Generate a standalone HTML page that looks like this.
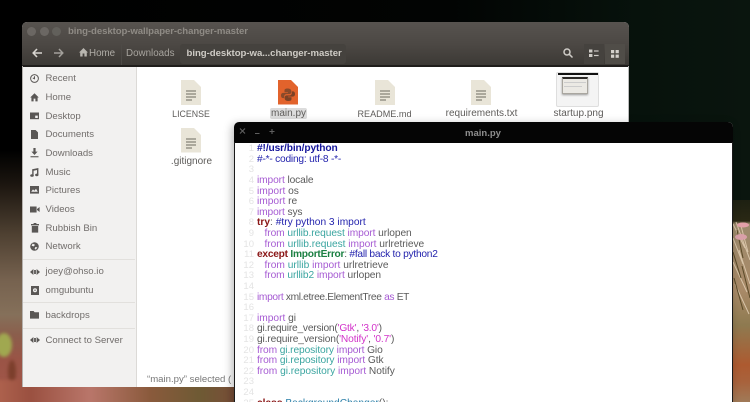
<!DOCTYPE html>
<html><head><meta charset="utf-8"><title>main.py</title>
<style>
html,body{margin:0;padding:0;background:#000}
#o{position:relative;width:750px;height:402px;overflow:hidden;background:#000}
#p{position:absolute;left:0;top:0;width:750px;height:402px;overflow:hidden;font-family:"Liberation Sans",sans-serif;background:#000;filter:blur(.35px)}
#p div{position:absolute}
.t{white-space:nowrap}
.fw{left:22px;top:22px;width:607px;height:365px;border-radius:5px 5px 0 0;overflow:hidden;background:#fff}
.s{left:45.5px;margin-top:1px;font-size:9.6px;color:#716d6b;white-space:nowrap;line-height:12px}
.l{margin-top:.5px;font-size:10px;color:#5e5c5a;white-space:nowrap;line-height:12px;transform:translateX(-50%)}
.c{left:257px;margin-top:1.2px;font-size:10.2px;line-height:12px;color:#5a5a5a;white-space:pre}
.n{left:236px;margin-top:1.2px;width:18px;text-align:right;font-size:9.5px;line-height:12px;color:#e4e4e4}
.i{color:#a65bd3}.m{color:#3aa5a0}.k{color:#8a1616;font-weight:bold}.b{color:#2323ad}.g{color:#1c8043;font-weight:bold}.q{color:#d233c9}
svg{position:absolute;overflow:visible}
</style></head><body>
<div id="o"><div id="p">
<div style="inset:0;background:linear-gradient(90deg,#000 0,#020403 60%,#07120c 85%,#0a150e 100%)"></div>
<div style="left:0;top:150px;width:30px;height:252px;background:linear-gradient(180deg,#000 0,#1c1610 35px,#4f4132 85px,#76624f 130px,#85705a 165px,#8b5e4c 185px,#9a5446 210px,#a4574a 252px)"></div>
<svg style="left:0;top:0;filter:blur(1.5px)" width="750" height="402"><ellipse cx="4" cy="345" rx="8" ry="12" fill="#a0a850"/><ellipse cx="12" cy="372" rx="4" ry="12" fill="#7c3f2c"/></svg>
<div style="left:-6px;top:380px;width:250px;height:30px;background:linear-gradient(90deg,#b0644f,#9a5040 36px,#b9766a 96px,#8a5a3c 156px,#6e5a34 206px,#7b4a38 250px);filter:blur(1.5px)"></div>
<div style="left:730px;top:200px;width:24px;height:210px;background:linear-gradient(180deg,#1d2012 0,#2a2814 21px,#9c8a6c 24px,#a98a68 90px,#8e7a50 125px,#ad5a30 165px,#a8623c 182px,#a07a58 202px)"></div>
<svg style="left:733px;top:222px" width="17" height="120" stroke-width="1" fill="none"><path d="M0 2L12 26M3 0L17 38M0 16L10 42M6 28L17 62M0 40L14 70M2 62L16 92M8 4L15 30" stroke="#d8c4a8"/><path d="M4 8L10 36M0 30L8 56M9 44L17 76M1 56L10 88" stroke="#5a4a28"/><ellipse cx="10" cy="3" rx="6" ry="2.5" fill="#e2a0a8"/><ellipse cx="8" cy="15" rx="6" ry="3" fill="#d9a0a8"/></svg>

<div class="fw">
 <div style="left:0;top:0;width:607px;height:44px;background:linear-gradient(180deg,#57534f 0,#4c4844 22px,#3b3834 44px)"></div>
 <div style="left:0;top:43px;width:607px;height:1.5px;background:#1f1d1b"></div>
 <div style="left:1px;top:44.5px;width:113px;height:321px;background:#f2f1f0"></div>
 <div style="left:113.5px;top:44.5px;width:1px;height:321px;background:#dcdad7"></div>
 <div style="left:0;top:44px;width:1px;height:321px;background:#b5b1ad"></div>
 <div style="left:606px;top:44px;width:1px;height:321px;background:#bbb"></div>
</div>

<!-- titlebar -->
<div style="left:27px;top:27px;width:9px;height:9px;border-radius:50%;background:#6b6763"></div>
<div style="left:40px;top:27px;width:9px;height:9px;border-radius:50%;background:#6b6763"></div>
<div style="left:51.5px;top:27px;width:9px;height:9px;border-radius:50%;background:#62605b"></div>
<div class="t" style="left:68px;top:25px;font-size:9.6px;line-height:13px;font-weight:bold;color:#8f8b85;letter-spacing:-.08px">bing-desktop-wallpaper-changer-master</div>

<!-- toolbar -->
<svg style="left:32px;top:48px" width="11" height="10" fill="none" stroke="#d8d5d0" stroke-width="1.6"><path d="M10 5H1.5M5 1L1.2 5L5 9"/></svg>
<svg style="left:53px;top:48px" width="11" height="10" fill="none" stroke="#a3a09b" stroke-width="1.5"><path d="M1 5H9.5M6 1L9.8 5L6 9"/></svg>
<svg style="left:79px;top:48px" width="9" height="9" fill="#b9b6b0"><path d="M4.5 0L9 4.5H7.8V8.5H5.4V5.5H3.6V8.5H1.2V4.5H0Z"/></svg>
<div class="t" style="left:89px;top:48px;font-size:9.8px;line-height:12px;color:#b0ada7">Home</div>
<div style="left:120.5px;top:44px;width:1px;height:21px;background:#4d4a46"></div>
<div class="t" style="left:126px;top:48px;font-size:9.8px;line-height:12px;color:#a7a49e">Downloads</div>
<div style="left:180px;top:44px;width:166px;height:20px;background:#45423e;border-radius:3px"></div>
<div class="t" style="left:186.5px;top:48px;font-size:9.6px;line-height:12px;font-weight:bold;color:#cfccc6;letter-spacing:-.03px">bing-desktop-wa...changer-master</div>
<svg style="left:563px;top:48px" width="10" height="10" fill="none" stroke="#cfccc7" stroke-width="1.5"><circle cx="4" cy="4" r="3"/><path d="M6.3 6.3L9.5 9.5"/></svg>
<div style="left:584px;top:44px;width:20px;height:20px;background:#45423e"></div>
<svg style="left:589px;top:49px" width="10" height="9" fill="#cfccc7"><rect x="0" y="0.5" width="3.4" height="3"/><rect x="0" y="5" width="3.4" height="3"/><rect x="5" y="1.4" width="4.6" height="1.2"/><rect x="5" y="5.9" width="4.6" height="1.2"/></svg>
<div style="left:604.5px;top:44px;width:20px;height:20px;background:#504d48"></div>
<svg style="left:611px;top:49.5px" width="8" height="8" fill="#d4d1cc"><rect width="3.2" height="3.2"/><rect x="4.6" width="3.2" height="3.2"/><rect y="4.6" width="3.2" height="3.2"/><rect x="4.6" y="4.6" width="3.2" height="3.2"/></svg>

<!-- sidebar icons -->
<svg style="left:30px;top:74px" width="9" height="9" fill="none" stroke="#5a5755" stroke-width="1"><circle cx="4.5" cy="4.5" r="3.9"/><path d="M4.5 2.2V4.7L2.8 4"/></svg>
<svg style="left:30px;top:93px" width="9" height="9" fill="#5a5755"><path d="M4.5 0.2L8.8 4.5H7.6V8.4H5.4V5.6H3.6V8.4H1.4V4.5H0.2Z"/></svg>
<svg style="left:30px;top:112px" width="9" height="8" fill="#5a5755"><path d="M0 .5H9V7.2H0Z"/><rect x="5.2" y="3.6" width="2.6" height="2.4" fill="#f2f1f0"/></svg>
<svg style="left:31px;top:130px" width="7" height="9" fill="#5a5755"><path d="M0 0H4.6L7 2.4V9H0Z"/></svg>
<svg style="left:30px;top:148px" width="9" height="10" fill="#5a5755"><path d="M3.4 0H5.6V3.6H7.6L4.5 7L1.4 3.6H3.4Z"/><rect x="0.5" y="8.2" width="8" height="1.1"/></svg>
<svg style="left:30px;top:167.5px" width="9" height="9" fill="#5a5755"><path d="M2.2 1.2L8.4 0V6.8H7V2L3.6 2.8V7.6H2.2Z"/><ellipse cx="2" cy="7.5" rx="1.8" ry="1.3"/><ellipse cx="6.8" cy="6.9" rx="1.7" ry="1.3"/></svg>
<svg style="left:30px;top:186px" width="9" height="8" fill="#5a5755"><path d="M0 0H9V7.6H0Z"/><path d="M1.2 5.8L3 3.4L4.4 4.8L6 2.8L7.8 5.8Z" fill="#f2f1f0"/></svg>
<svg style="left:30px;top:205.5px" width="10" height="7" fill="#5a5755"><rect y="0.5" width="6.6" height="6"/><path d="M7 3L9.6 1V6L7 4Z"/></svg>
<svg style="left:30.5px;top:223px" width="8" height="10" fill="#5a5755"><rect x="0" y="1" width="8" height="1.4"/><rect x="2.6" y="0" width="2.8" height="1"/><rect x="0.8" y="3" width="6.4" height="6.6"/></svg>
<svg style="left:30px;top:242px" width="9" height="9" fill="#5a5755"><circle cx="4.5" cy="4.5" r="4.3"/><path d="M2.6 1.6L5 2.8L3.8 4.4L1.6 3.8ZM5.4 5L7.4 5.4L5.8 7.6L4.6 6.6Z" fill="#f2f1f0"/></svg>
<svg style="left:29.5px;top:268.5px" width="10" height="6" fill="#5a5755"><path d="M0 3L3.4 0V6ZM10 3L6.6 0V6Z"/><rect x="4" y="1" width="0.9" height="4"/><rect x="5.1" y="1" width="0.9" height="4"/></svg>
<svg style="left:30.5px;top:285.5px" width="8" height="9" fill="#5a5755"><path d="M0 0H8V9H0Z"/><circle cx="4" cy="4.2" r="2" fill="#f2f1f0"/><circle cx="4" cy="4.2" r=".7"/></svg>
<svg style="left:30px;top:311px" width="9" height="8" fill="#5a5755"><path d="M0 0H3.6L4.6 1.2H9V7.6H0Z"/></svg>
<svg style="left:29.5px;top:337px" width="10" height="6" fill="#5a5755"><path d="M0 3L3.4 0V6ZM10 3L6.6 0V6Z"/><rect x="4" y="1" width="0.9" height="4"/><rect x="5.1" y="1" width="0.9" height="4"/></svg>

<div class="s" style="top:72px">Recent</div>
<div class="s" style="top:90.5px">Home</div>
<div class="s" style="top:109.5px">Desktop</div>
<div class="s" style="top:128px">Documents</div>
<div class="s" style="top:146.5px">Downloads</div>
<div class="s" style="top:165.5px">Music</div>
<div class="s" style="top:184px">Pictures</div>
<div class="s" style="top:202.5px">Videos</div>
<div class="s" style="top:221.5px">Rubbish Bin</div>
<div class="s" style="top:240px">Network</div>
<div style="left:23px;top:258.5px;width:112px;height:1px;background:#e2e0dd"></div>
<div class="s" style="top:265px">joey@ohso.io</div>
<div class="s" style="top:284px">omgubuntu</div>
<div style="left:23px;top:302px;width:112px;height:1px;background:#e2e0dd"></div>
<div class="s" style="top:308.5px">backdrops</div>
<div style="left:23px;top:327.5px;width:112px;height:1px;background:#e2e0dd"></div>
<div class="s" style="top:333.5px">Connect to Server</div>

<!-- files -->
<svg style="left:181px;top:80px" width="20" height="25"><path d="M0 0H13L20 7V25H0Z" fill="#e9e5d8"/><path d="M5 11H15M5 14H15M5 17H15M5 20H11" stroke="#6d6a60" stroke-width="1"/></svg>
<div class="l" style="left:191px;top:107.5px;font-size:8.8px">LICENSE</div>

<svg style="left:278px;top:80px" width="20" height="25"><path d="M0 0H13L20 7V24.5H0Z" fill="#e2632c"/><path d="M9.5 8.5c-3 0-3 1.2-3 2.6v1.2h3.4v.6H5.2c-1.6 0-2.2 1.2-2.2 2.6s.7 2.6 2 2.6h1.2v-1.6c0-1.4 1-2.4 2.4-2.4h2.8c1.1 0 1.9-.9 1.9-2V11c0-1.4-1.2-2.5-3.8-2.5Z" fill="#8a4a2a"/><path d="M10.5 21c3 0 3-1.2 3-2.6v-1.2h-3.4v-.6h4.7c1.6 0 2.2-1.2 2.2-2.6s-.7-2.6-2-2.6h-1.2V13c0 1.4-1 2.4-2.4 2.4H8.6c-1.1 0-1.9.9-1.9 2v1.1c0 1.4 1.2 2.5 3.8 2.5Z" fill="#7c4226"/></svg>
<div style="left:270px;top:107.5px;width:37px;height:11px;background:#dcdcdc;border-radius:2px"></div>
<div class="l" style="left:288.5px;top:107.5px">main.py</div>

<svg style="left:375px;top:80px" width="20" height="25"><path d="M0 0H13L20 7V25H0Z" fill="#e9e5d8"/><path d="M5 11H15M5 14H15M5 17H15M5 20H11" stroke="#6d6a60" stroke-width="1"/></svg>
<div class="l" style="left:384.5px;top:107.5px;font-size:9.1px">README.md</div>

<svg style="left:471px;top:80px" width="20" height="25"><path d="M0 0H13L20 7V25H0Z" fill="#e9e5d8"/><path d="M5 11H15M5 14H15M5 17H15M5 20H11" stroke="#6d6a60" stroke-width="1"/></svg>
<div class="l" style="left:481.5px;top:107.5px">requirements.txt</div>

<div style="left:556px;top:71.5px;width:43px;height:35px;background:#f4f4f4;border:1px solid #dedede;border-radius:2px;box-sizing:border-box"></div>
<div style="left:557.5px;top:73px;width:40px;height:2px;background:#111"></div>
<div style="left:562px;top:77px;width:26px;height:17px;background:#ebe9e4;border:1px solid #a9a69f;border-top:2px solid #2b2926;box-sizing:border-box;box-shadow:0 1px 2px #999"></div>
<div style="left:564px;top:82px;width:22px;height:1px;background:#ccc"></div>
<div style="left:564px;top:86px;width:18px;height:1px;background:#ccc"></div>
<div class="l" style="left:578.5px;top:107.5px">startup.png</div>

<svg style="left:181px;top:128px" width="20" height="25"><path d="M0 0H13L20 7V24.5H0Z" fill="#e9e5d8"/><path d="M5 11H15M5 14H15M5 17H15M5 20H11" stroke="#6d6a60" stroke-width="1"/></svg>
<div class="l" style="left:191.5px;top:155.5px">.gitignore</div>

<div class="t" style="left:147px;top:373.5px;font-size:9.6px;line-height:12px;color:#777">“main.py” selected  (</div>

<!-- editor -->
<div style="left:234px;top:122px;width:499px;height:290px;border-radius:5px 5px 0 0;background:#fff;box-shadow:-2px 2px 9px rgba(0,0,0,.28)"></div>
<div style="left:234px;top:121.5px;width:499px;height:21px;border-radius:5px 5px 0 0;background:#050505"></div>
<div style="left:234px;top:142px;width:1.2px;height:260px;background:#1a1a1a"></div>
<div style="left:732px;top:142px;width:1.2px;height:260px;background:#1a1a1a"></div>
<svg style="left:239px;top:127px" width="40" height="10" fill="none" stroke="#5f5f5f" stroke-width="1.1"><path d="M1 1.5L6 6.5M6 1.5L1 6.5M16 6.5H20.5M33 2V7M30.5 4.5H35.5"/></svg>
<div class="t" style="left:483px;top:127.5px;transform:translateX(-50%);font-size:9.5px;line-height:12px;font-weight:bold;color:#8e8e8e">main.py</div>

<div class="n" style="top:142px">1</div><div class="c" style="top:142px;letter-spacing:-.12px"><b style="color:#15159a">#!/usr/bin/python</b></div>
<div class="n" style="top:152.6px">2</div><div class="c" style="top:152.6px;letter-spacing:-.22px"><span class="b">#-*- coding: utf-8 -*-</span></div>
<div class="n" style="top:163.2px">3</div>
<div class="n" style="top:173.8px">4</div><div class="c" style="top:173.8px;letter-spacing:-.1px"><span class="i">import</span> locale</div>
<div class="n" style="top:184.4px">5</div><div class="c" style="top:184.4px"><span class="i">import</span> os</div>
<div class="n" style="top:195px">6</div><div class="c" style="top:195px"><span class="i">import</span> re</div>
<div class="n" style="top:205.6px">7</div><div class="c" style="top:205.6px;letter-spacing:-.1px"><span class="i">import</span> sys</div>
<div class="n" style="top:216.2px">8</div><div class="c" style="top:216.2px"><span class="k">try</span>: <span class="b">#try python 3 import</span></div>
<div class="n" style="top:226.8px">9</div><div class="c" style="top:226.8px;left:264.5px;letter-spacing:-.07px"><span class="i">from</span> <span class="m">urllib.request</span> <span class="i">import</span> urlopen</div>
<div class="n" style="top:237.4px">10</div><div class="c" style="top:237.4px;left:264.5px;letter-spacing:-.03px"><span class="i">from</span> <span class="m">urllib.request</span> <span class="i">import</span> urlretrieve</div>
<div class="n" style="top:248px">11</div><div class="c" style="top:248px;letter-spacing:-.25px"><span class="k">except</span> <span class="g">ImportError</span>: <span class="b">#fall back to python2</span></div>
<div class="n" style="top:258.6px">12</div><div class="c" style="top:258.6px;left:264.5px"><span class="i">from</span> <span class="m">urllib</span> <span class="i">import</span> urlretrieve</div>
<div class="n" style="top:269.2px">13</div><div class="c" style="top:269.2px;left:264.5px;letter-spacing:-.07px"><span class="i">from</span> <span class="m">urllib2</span> <span class="i">import</span> urlopen</div>
<div class="n" style="top:279.8px">14</div>
<div class="n" style="top:290.4px">15</div><div class="c" style="top:290.4px;letter-spacing:-.33px"><span class="i">import</span> xml.etree.ElementTree <span class="i">as</span> ET</div>
<div class="n" style="top:301px">16</div>
<div class="n" style="top:311.6px">17</div><div class="c" style="top:311.6px"><span class="i">import</span> gi</div>
<div class="n" style="top:322.2px">18</div><div class="c" style="top:322.2px;letter-spacing:-.2px">gi.require_version(<span class="q">'Gtk'</span>, <span class="q">'3.0'</span>)</div>
<div class="n" style="top:332.8px">19</div><div class="c" style="top:332.8px;letter-spacing:-.12px">gi.require_version(<span class="q">'Notify'</span>, <span class="q">'0.7'</span>)</div>
<div class="n" style="top:343.4px">20</div><div class="c" style="top:343.4px;letter-spacing:-.1px"><span class="i">from</span> <span class="m">gi.repository</span> <span class="i">import</span> Gio</div>
<div class="n" style="top:354px">21</div><div class="c" style="top:354px;letter-spacing:-.07px"><span class="i">from</span> <span class="m">gi.repository</span> <span class="i">import</span> Gtk</div>
<div class="n" style="top:364.6px">22</div><div class="c" style="top:364.6px;letter-spacing:-.03px"><span class="i">from</span> <span class="m">gi.repository</span> <span class="i">import</span> Notify</div>
<div class="n" style="top:375.2px">23</div>
<div class="n" style="top:385.8px">24</div>
<div class="n" style="top:396.4px">25</div><div class="c" style="top:396.4px"><span class="k">class</span> <span style="color:#2a7fa8">BackgroundChanger</span>():</div>
</div></div>
</body></html>
